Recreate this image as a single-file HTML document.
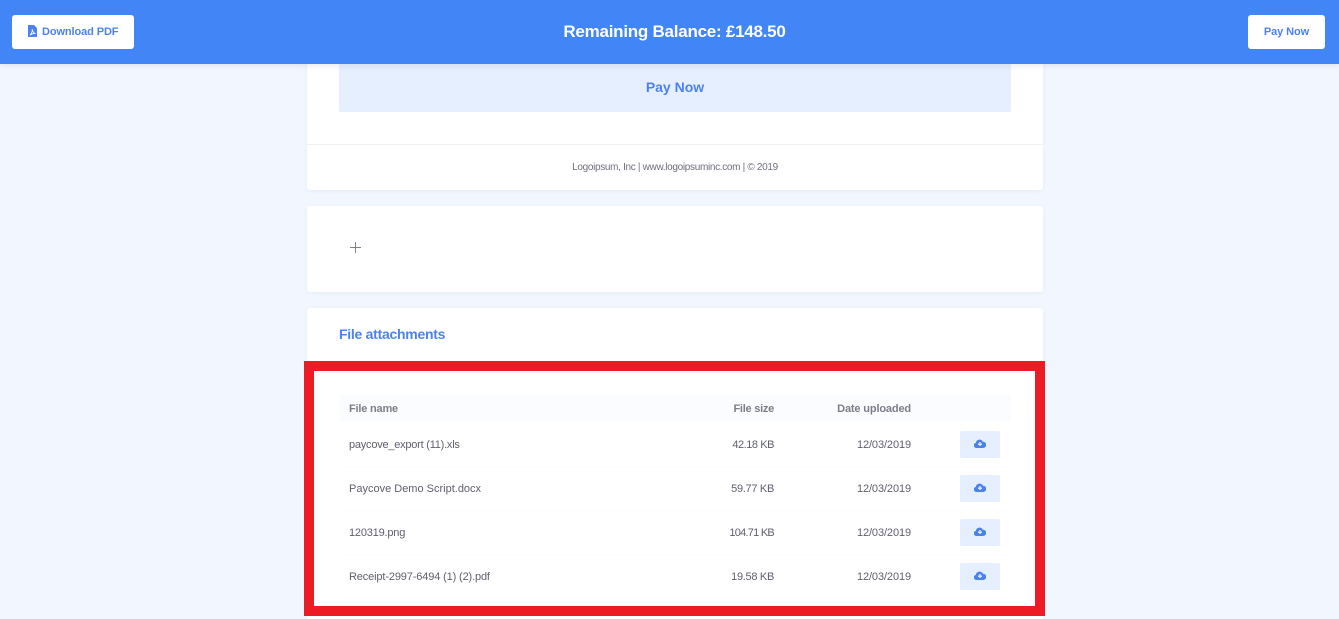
<!DOCTYPE html>
<html><head><meta charset="utf-8"><style>
*{box-sizing:border-box}
html,body{margin:0;padding:0;width:1339px;height:619px;overflow:hidden;background:#f2f7ff;font-family:"Liberation Sans",sans-serif}
#w{position:relative;width:1339px;height:619px;overflow:hidden}
.a{position:absolute;white-space:nowrap}
.card{position:absolute;left:307px;width:736px;background:#fff;border-radius:3px;box-shadow:0 1px 4px rgba(60,80,130,.07)}
.t{position:absolute;white-space:nowrap;font-size:11px;line-height:14px;color:#5f5f6e}
.r{text-align:right}
.h{font-weight:bold;color:#7d7d8a}
.btn{position:absolute;left:960px;width:40px;height:27px;background:#e5efff;border-radius:2px}
.btn svg{position:absolute;left:14px;top:7px}
.line{position:absolute;left:339px;width:672px;height:1px;background:#fbfcfe}
.d{left:791px;width:120px;text-align:right;letter-spacing:-.1px}
.s{left:674px;width:100px;text-align:right}
</style></head><body><div id="w">
<div class="card" style="top:40px;height:150px"></div>
<div class="a" style="left:339px;top:64px;width:672px;height:48px;background:#e5efff;border-radius:2px"></div>
<div class="a" style="left:339px;top:64px;width:672px;height:47px;line-height:47px;text-align:center;font-size:14px;font-weight:bold;color:#4c82f0">Pay Now</div>
<div class="a" style="left:307px;top:144px;width:736px;height:1px;background:#f1f2f4"></div>
<div class="t" style="left:307px;width:736px;top:161px;text-align:center;font-size:10px;letter-spacing:-.32px;color:#6f6f80">Logoipsum, Inc | www.logoipsuminc.com | © 2019</div>

<div class="card" style="top:206px;height:86px"></div>
<svg class="a" style="left:350px;top:242px" width="11" height="11" viewBox="0 0 11 11"><path d="M5.5 0V11M0 5.5H11" stroke="#808088" stroke-width="1" fill="none"/></svg>

<div class="card" style="top:308px;height:311px;border-radius:3px 3px 0 0"></div>
<div class="a" style="left:339px;top:326px;font-size:14px;line-height:17px;font-weight:bold;color:#4c82f0;letter-spacing:-.27px">File attachments</div>

<div class="a" style="left:304px;top:361px;width:741px;height:255px;border:10px solid #ed1c24;background:#fff"></div>
<div class="a" style="left:339px;top:394px;width:672px;height:28px;background:#fbfcff"></div>
<div class="line" style="top:466px"></div><div class="line" style="top:510px"></div><div class="line" style="top:554px"></div><div class="line" style="top:598px"></div>

<div class="t h" style="left:349px;top:402px;letter-spacing:-.2px">File name</div>
<div class="t h s" style="top:402px;letter-spacing:-.25px">File size</div>
<div class="t h d" style="top:402px;letter-spacing:-.15px">Date uploaded</div>

<div class="t" style="left:349px;top:438px;letter-spacing:-.23px">paycove_export (11).xls</div>
<div class="t s" style="top:438px;letter-spacing:-.45px">42.18 KB</div>
<div class="t d" style="top:438px">12/03/2019</div>
<div class="btn" style="top:431px"><svg width="12" height="11" viewBox="0 0 12 11"><path d="M2.7 10A2.7 2.7 0 0 1 1.9 4.7 3.7 3.7 0 0 1 8.9 3.7 3.1 3.1 0 0 1 9.3 10Z" fill="#4c82f0"/><path d="M6 4V8M4 6.2H8" stroke="#e5efff" stroke-width="1.3" fill="none"/></svg></div>

<div class="t" style="left:349px;top:482px">Paycove Demo Script.docx</div>
<div class="t s" style="top:482px;letter-spacing:-.3px">59.77 KB</div>
<div class="t d" style="top:482px">12/03/2019</div>
<div class="btn" style="top:475px"><svg width="12" height="11" viewBox="0 0 12 11"><path d="M2.7 10A2.7 2.7 0 0 1 1.9 4.7 3.7 3.7 0 0 1 8.9 3.7 3.1 3.1 0 0 1 9.3 10Z" fill="#4c82f0"/><path d="M6 4V8M4 6.2H8" stroke="#e5efff" stroke-width="1.3" fill="none"/></svg></div>

<div class="t" style="left:349px;top:526px;letter-spacing:-.2px">120319.png</div>
<div class="t s" style="top:526px;letter-spacing:-.75px">104.71 KB</div>
<div class="t d" style="top:526px">12/03/2019</div>
<div class="btn" style="top:519px"><svg width="12" height="11" viewBox="0 0 12 11"><path d="M2.7 10A2.7 2.7 0 0 1 1.9 4.7 3.7 3.7 0 0 1 8.9 3.7 3.1 3.1 0 0 1 9.3 10Z" fill="#4c82f0"/><path d="M6 4V8M4 6.2H8" stroke="#e5efff" stroke-width="1.3" fill="none"/></svg></div>

<div class="t" style="left:349px;top:570px;letter-spacing:-.14px">Receipt-2997-6494 (1) (2).pdf</div>
<div class="t s" style="top:570px;letter-spacing:-.3px">19.58 KB</div>
<div class="t d" style="top:570px">12/03/2019</div>
<div class="btn" style="top:563px"><svg width="12" height="11" viewBox="0 0 12 11"><path d="M2.7 10A2.7 2.7 0 0 1 1.9 4.7 3.7 3.7 0 0 1 8.9 3.7 3.1 3.1 0 0 1 9.3 10Z" fill="#4c82f0"/><path d="M6 4V8M4 6.2H8" stroke="#e5efff" stroke-width="1.3" fill="none"/></svg></div>

<div class="a" style="left:0;top:0;width:1339px;height:64px;background:#4285f6;box-shadow:0 2px 6px rgba(50,70,120,.1)"></div>
<div class="a" style="left:12px;top:15px;width:122px;height:34px;background:#fff;border-radius:3px"></div>
<svg class="a" style="left:28px;top:25px" width="9" height="12" viewBox="0 0 9 12"><path d="M0 0H6L9 3V12H0Z" fill="#4c82f0"/><path d="M2 10C3.5 8.5 4.5 6 4.2 4.2 4.6 6.5 5.5 8 7.5 8.5 5.5 8.3 3.8 8.8 2 10Z" fill="none" stroke="#fff" stroke-width=".8"/></svg>
<div class="a" style="left:42px;top:25px;font-size:11px;line-height:14px;font-weight:bold;color:#4c82f0;letter-spacing:-.1px">Download PDF</div>
<div class="a" style="left:5px;top:22px;width:1339px;text-align:center;font-size:17px;line-height:20px;font-weight:bold;color:#fff;letter-spacing:-.25px">Remaining Balance: £148.50</div>
<div class="a" style="left:1248px;top:15px;width:77px;height:34px;background:#fff;border-radius:3px"></div>
<div class="a" style="left:1248px;top:25px;width:77px;text-align:center;font-size:11px;line-height:14px;font-weight:bold;color:#4c82f0;letter-spacing:-.1px">Pay Now</div>
</div></body></html>
